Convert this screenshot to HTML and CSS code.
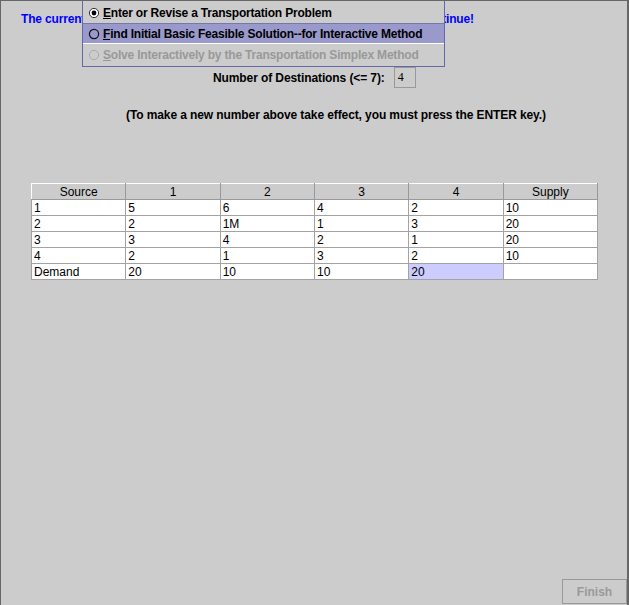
FILE: index.html
```html
<!DOCTYPE html>
<html>
<head>
<meta charset="utf-8">
<link rel="stylesheet" href="styles.css">
</head>
<body>
<div class="window">
  <p class="title">The current problem is shown below. Select an option from the menu to continue!</p>
  <div class="dest">
    <span class="dest-label">Number of Destinations (&lt;= 7):</span>
    <span class="field">4</span>
  </div>
  <p class="note">(To make a new number above take effect, you must press the ENTER key.)</p>
  <table class="grid">
    <thead>
      <tr><th>Source</th><th>1</th><th>2</th><th>3</th><th>4</th><th>Supply</th></tr>
    </thead>
    <tbody>
      <tr><td>1</td><td>5</td><td>6</td><td>4</td><td>2</td><td>10</td></tr>
      <tr><td>2</td><td>2</td><td>1M</td><td>1</td><td>3</td><td>20</td></tr>
      <tr><td>3</td><td>3</td><td>4</td><td>2</td><td>1</td><td>20</td></tr>
      <tr><td>4</td><td>2</td><td>1</td><td>3</td><td>2</td><td>10</td></tr>
      <tr><td>Demand</td><td>20</td><td>10</td><td>10</td><td class="sel">20</td><td></td></tr>
    </tbody>
  </table>
  <div class="footer">
    <button class="finish" disabled>Finish</button>
  </div>

  <div class="menu">
    <div class="item">
      <svg class="radio" width="12" height="12" viewBox="0 0 12 12"><circle cx="6" cy="6" r="4.6" fill="#fff" stroke="#333" stroke-width="1"/><circle cx="6" cy="6" r="2.4" fill="#000"/></svg>
      <span><u>E</u>nter or Revise a Transportation Problem</span>
    </div>
    <div class="item active">
      <svg class="radio" width="12" height="12" viewBox="0 0 12 12"><circle cx="6" cy="6" r="4.6" fill="none" stroke="#111" stroke-width="1.2"/></svg>
      <span><u>F</u>ind Initial Basic Feasible Solution--for Interactive Method</span>
    </div>
    <div class="item disabled">
      <svg class="radio" width="12" height="12" viewBox="0 0 12 12"><circle cx="6" cy="6" r="4.6" fill="none" stroke="#aaa" stroke-width="1"/></svg>
      <span><u>S</u>olve Interactively by the Transportation Simplex Method</span>
    </div>
  </div>
</div>
</body>
</html>
```
FILE: styles.css
```css
* { box-sizing: border-box; }
html, body { margin: 0; padding: 0; background: #cccccc; }
body { font-family: "Liberation Sans", Arial, sans-serif; font-size: 12px; }

.window {
  position: relative;
  width: 629px;
  height: 605px;
  background: #cccccc;
  border-left: 1px solid #666666;
  border-top: 1px solid #666666;
  border-right: 2px solid #666666;
  display: flex;
  flex-direction: column;
  overflow: hidden;
}

.title {
  margin: 11px 0 0 20px;
  color: #0000ff;
  font-weight: bold;
  line-height: 15px;
  white-space: nowrap;
  letter-spacing: -0.17px;
}

.dest {
  margin-top: 40px;
  display: flex;
  align-items: center;
  padding-left: 212px;
  height: 21px;
}
.dest-label { font-weight: bold; letter-spacing: -0.1px; }
.field {
  margin-left: 9px;
  width: 22px;
  height: 21px;
  border: 1px solid #999999;
  font-family: "Liberation Serif", serif;
  font-size: 12px;
  line-height: 19px;
  padding-left: 3px;
}

.note {
  margin: 20px 0 0 125px;
  font-weight: bold;
  line-height: 15px;
  white-space: nowrap;
  letter-spacing: -0.1px;
}

.grid {
  margin: 60px 0 0 30px;
  width: 567px;
  border-collapse: collapse;
  table-layout: fixed;
  font-size: 12px;
}
.grid th {
  height: 16px;
  padding: 0;
  font-weight: normal;
  text-align: center;
  background: #cccccc;
  border-top: 1px solid #ffffff;
  border-left: 1px solid #ffffff;
  border-right: 1px solid #999999;
  border-bottom: 1px solid #999999;
  line-height: 14px;
}
.grid td {
  height: 16px;
  padding: 0 0 0 2px;
  background: #ffffff;
  border: 1px solid #a3a3a3;
  line-height: 14px;
}
.grid td.sel { background: #ccccff; }

.footer {
  margin-top: auto;
  display: flex;
  justify-content: flex-end;
  padding: 0 0 1px 0;
}
.finish {
  width: 65px;
  height: 25px;
  margin: 0;
  background: #cccccc;
  border: 1px solid #999999;
  color: #999999;
  font-family: "Liberation Sans", Arial, sans-serif;
  font-weight: bold;
  font-size: 12px;
  padding: 0;
}

.menu {
  position: absolute;
  left: 81px;
  top: -2px;
  width: 363px;
  background: #cccccc;
  border: 1px solid #6666aa;
  font-weight: bold;
  letter-spacing: -0.2px;
}
.item {
  display: flex;
  align-items: center;
  height: 23px;
  padding-left: 5px;
  white-space: nowrap;
  padding-top: 3px;
}
.item .radio { margin-right: 3px; flex: none; }
.item.active {
  height: 21px;
  padding-top: 0;
  background: #9999cc;
  border-top: 1px solid #7777aa;
  border-bottom: 1px solid #ffffff;
}
.item.disabled { color: #999999; height: 22px; padding-top: 0; }
```
